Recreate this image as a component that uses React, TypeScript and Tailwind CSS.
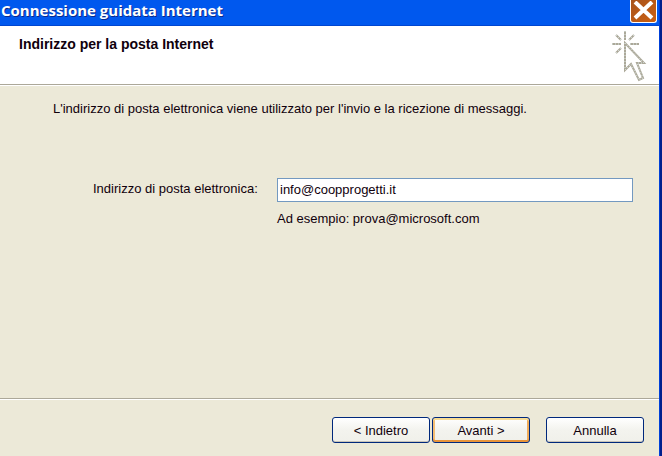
import type { ReactNode } from "react";

// Outline pointer with a burst at its tip, used in the page header. The grey
// strokes carry a dotted teal pass on top, which gives the embossed look.
const RAYS = "M14 1v9M1 14h9M19 14h9M5 5l5 5M23 5l-5 5M5 23l5-5";
const POINTER = "M14 13v27l6-6 8 16 4-2-6-15h7z";

function ClickIcon() {
  return (
    <svg width="36" height="52" viewBox="0 0 36 52" fill="none" aria-hidden="true">
      <g stroke="#aca899" strokeWidth="2">
        <path d={RAYS} />
        <path d={POINTER} />
      </g>
      <g stroke="#dcebe8" strokeWidth="1" strokeDasharray="1 2">
        <path d={RAYS} />
        <path d={POINTER} />
      </g>
    </svg>
  );
}

type PushButtonProps = {
  children: ReactNode;
  isDefault?: boolean;
};

function PushButton({ children, isDefault = false }: PushButtonProps) {
  return (
    <button
      type={isDefault ? "submit" : "button"}
      className={
        isDefault
          ? "h-[26px] w-[98px] rounded-[3px] border border-[#00287c] bg-linear-to-b from-white via-[#f3f3ee] to-[#f0f0ea] pt-0.5 text-[13px] leading-4 shadow-[inset_0_2px_0_#f8dc94,inset_0_-2px_0_#e8943a,inset_2px_0_0_#f3bd74,inset_-2px_0_0_#f0ad5c]"
          : "h-[26px] w-[98px] rounded-[3px] border border-[#00287c] bg-linear-to-b from-white via-[#f3f3ee] to-[#f0f0ea] pt-0.5 text-[13px] leading-4 shadow-[inset_0_-1px_0_#c9c4b8]"
      }
    >
      {children}
    </button>
  );
}

export default function App() {
  return (
    <div className="flex min-h-screen flex-col border-r-2 border-[#001f8c] bg-[#ece9d8] font-['Liberation_Sans',Arial,sans-serif] text-[13px] leading-4 text-[#10000c]">
      <header className="flex h-[26px] items-start justify-between border-r border-b border-r-[#0040d8] border-b-[#0046d0] bg-[#0058ee] pl-px">
        <h1 className="font-['Open_Sans',sans-serif] text-[15px] leading-5 font-bold text-white [text-shadow:1px_1px_0_#0a2a8c]">
          Connessione guidata Internet
        </h1>
        <button
          type="button"
          aria-label="Chiudi"
          className="mr-0.5 flex h-[23px] w-[27px] items-center justify-center rounded-b-[3px] border border-t-0 border-white bg-linear-to-br from-[#a8541c] to-[#cc6010]"
        >
          <svg width="21" height="20" viewBox="0 0 21 20" stroke="#fff" strokeWidth="4" aria-hidden="true">
            <path d="M2 1l17 16M19 1L2 17" />
          </svg>
        </button>
      </header>

      <form
        className="flex flex-1 flex-col border-r border-[#0040d8]"
        onSubmit={(e) => e.preventDefault()}
      >
        <div className="flex h-[58px] items-start justify-between bg-white pt-1 pr-3 pl-[19px]">
          <h2 className="pt-1.5 text-[14px] font-bold">Indirizzo per la posta Internet</h2>
          <ClickIcon />
        </div>
        <div className="h-0.5 border-t border-b border-t-[#aca899] border-b-white" />

        <main className="flex flex-1 flex-col pt-[15px] pr-[26px] pl-[53px]">
          <p>L'indirizzo di posta elettronica viene utilizzato per l'invio e la ricezione di messaggi.</p>
          <div className="flex pt-[61px] pl-10">
            <label htmlFor="email" className="w-[184px] pt-[3px]">
              Indirizzo di posta elettronica:
            </label>
            <div className="flex flex-1 flex-col gap-[9px]">
              <input
                id="email"
                type="email"
                defaultValue="info@coopprogetti.it"
                aria-describedby="email-hint"
                className="h-6 w-full border border-[#7399c0] bg-white px-0.5 pb-0.5 outline-none"
              />
              <p id="email-hint">Ad esempio: prova@microsoft.com</p>
            </div>
          </div>
        </main>

        <div className="h-0.5 border-t border-b border-t-[#aca899] border-b-white" />
        <footer className="flex justify-end gap-4 pt-[17px] pr-[15px] pb-[13px]">
          <div className="flex gap-0.5">
            <PushButton>&lt; Indietro</PushButton>
            <PushButton isDefault>Avanti &gt;</PushButton>
          </div>
          <PushButton>Annulla</PushButton>
        </footer>
      </form>
    </div>
  );
}
